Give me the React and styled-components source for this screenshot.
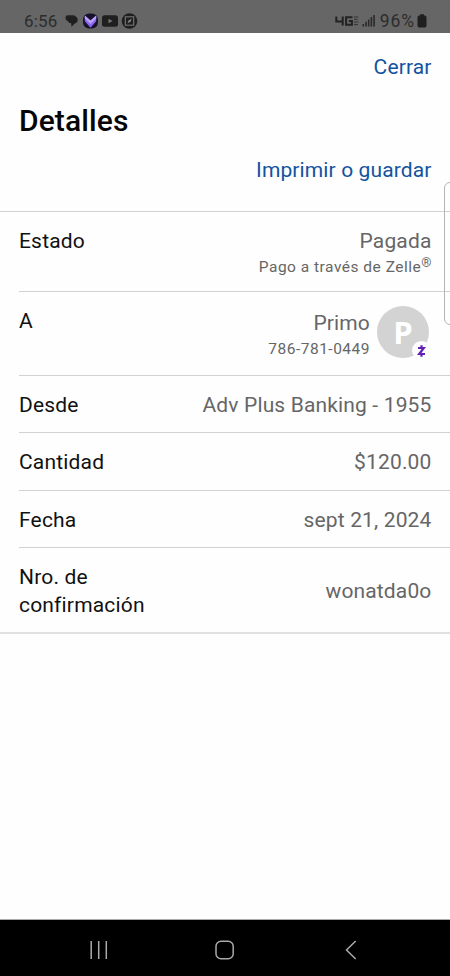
import React from "react";
import styled, { createGlobalStyle } from "styled-components";

const GlobalStyle = createGlobalStyle`
  * {
    box-sizing: border-box;
  }
  body {
    margin: 0;
    background: #fefefe;
    font-family: Roboto, "Liberation Sans", sans-serif;
  }
`;

const details = [
  { label: "Estado", value: "Pagada", note: "Pago a través de Zelle", mark: "®", height: 80 },
  { label: "A", value: "Primo", note: "786-781-0449", avatar: "P", height: 84 },
  { label: "Desde", value: "Adv Plus Banking - 1955", height: 57 },
  { label: "Cantidad", value: "$120.00", height: 58 },
  { label: "Fecha", value: "sept 21, 2024", height: 57 },
  { label: "Nro. de confirmación", value: "wonatda0o", height: 86 },
];

function StatusBar() {
  return (
    <StatusWrapper>
      <Clock>6:56</Clock>
      <svg width="76" height="18" viewBox="0 0 76 18">
        <path
          d="M4.500 3.200h6q1.800 0 2.600 1.700l.8 2-2 3.500h-5l-.6.6-1.200-1.600q-2.600-.5-2.600-3.200 0-3 2-3z"
          fill="#222"
        />
        <path
          d="M8.300 4.800h3.200q3.200 0 3.200 3 0 3-2.600 3.500l-3.600 3.500-.3-3.500q-2.900-.4-2.900-3.300 0-3.200 3-3.200z"
          fill="#1f1f1f"
        />
        <rect x="20" y="1.500" width="15" height="15" rx="6" fill="#17122a" />
        <path d="M21.800 3.500l5.700 5 5.700-5v5.800l-5.700 6.500-5.700-6.500z" fill="#8a63ee" />
        <path d="M21.800 3.500l5.700 5 5.700-5v3l-5.700 5.500-5.700-5.500z" fill="#b9a2f5" />
        <rect x="39" y="3.300" width="16" height="11.500" rx="2.500" fill="#1f1f1f" />
        <path d="M45.500 6.700l4 2.300-4 2.300z" fill="#777" />
        <circle cx="66.500" cy="9" r="7.800" fill="#1f1f1f" />
        <rect
          x="62.300"
          y="4.800"
          width="8.400"
          height="8.400"
          fill="none"
          stroke="#777"
          strokeWidth="1.100"
        />
        <path d="M64.500 11.200l1.200-3 3-1.500-1.200 3z" fill="#888" />
      </svg>
      <Spacer />
      <svg width="40" height="18" viewBox="0 0 40 18">
        <g fill="none" stroke="#222" strokeWidth="2">
          <path d="M1.300 4.500v5h7.200M7.700 4.500v9" />
          <path d="M17.500 5.300h-6.400v7.400h5.800v-3.700h-3" />
        </g>
        <path d="M19 5h4.300M19 7.300h3.500M19 10h4.300M19 12.600h4" stroke="#333" strokeWidth="1" />
        <path
          d="M28.300 12v2.500M31 9.800v4.700M33.700 7.500v7M36.400 5v9.500M39.100 3v11.500"
          stroke="#2a2a2a"
          strokeWidth="1.600"
        />
      </svg>
      <Battery>96%</Battery>
      <svg width="10" height="14" viewBox="0 0 10 14">
        <path
          d="M3 .3h4v1.200h.8q1.700 0 1.700 1.700v8.600q0 1.700-1.700 1.700h-5.600q-1.700 0-1.700-1.700v-8.600q0-1.700 1.700-1.700h.8z"
          fill="#1f1f1f"
        />
      </svg>
    </StatusWrapper>
  );
}

function Avatar({ letter }) {
  return (
    <AvatarCircle>
      {letter}
      <ZelleBadge>
        <svg width="10" height="14" viewBox="0 0 10 14">
          <path
            d="M1 4h5.800l-4.600 6h5.800M4.500 1.200v2.800M4.500 10v2.800"
            fill="none"
            stroke="#6420b5"
            strokeWidth="2.200"
          />
        </svg>
      </ZelleBadge>
    </AvatarCircle>
  );
}

function DetailRow({ item, last }) {
  return (
    <Row $height={item.height} $last={last}>
      <Label>{item.label}</Label>
      <ValueGroup $top={item.avatar ? 2 : 0} $center={last}>
        <div>
          <Value>{item.value}</Value>
          {item.note && (
            <Note>
              {item.note}
              {item.mark && <sup>{item.mark}</sup>}
            </Note>
          )}
        </div>
        {item.avatar && <Avatar letter={item.avatar} />}
      </ValueGroup>
    </Row>
  );
}

function NavBar() {
  return (
    <NavWrapper>
      <svg width="20" height="20" viewBox="0 0 20 20">
        <path d="M2.200 1v18M9.700 1v18M17.300 1v18" stroke="#aaa" strokeWidth="1.500" />
      </svg>
      <svg width="20" height="20" viewBox="0 0 20 20">
        <rect
          x="1"
          y="1.300"
          width="17.200"
          height="17.400"
          rx="5"
          fill="none"
          stroke="#aaa"
          strokeWidth="1.500"
        />
      </svg>
      <svg width="20" height="20" viewBox="0 0 20 20">
        <path d="M14.700 1l-9.200 9 9.200 9" fill="none" stroke="#aaa" strokeWidth="1.500" />
      </svg>
    </NavWrapper>
  );
}

export default function App() {
  return (
    <Screen>
      <GlobalStyle />
      <StatusBar />
      <Header>
        <LinkButton>Cerrar</LinkButton>
        <Title>Detalles</Title>
        <LinkButton>Imprimir o guardar</LinkButton>
      </Header>
      <List>
        {details.map((item, i) => (
          <DetailRow key={item.label} item={item} last={i === details.length - 1} />
        ))}
      </List>
      <EdgeHandle />
      <NavBar />
    </Screen>
  );
}

const Screen = styled.div`
  position: relative;
  display: flex;
  flex-direction: column;
  width: 450px;
  height: 976px;
  overflow: hidden;
  background: #fefefe;
`;

const StatusWrapper = styled.div`
  display: flex;
  align-items: center;
  height: 33px;
  padding: 9px 23px 0 24px;
  background: #666;
  color: #2c2c2c;
`;

const Clock = styled.span`
  width: 39px;
  font-size: 17px;
  letter-spacing: 0.2px;
`;

const Spacer = styled.div`
  flex: 1;
`;

const Battery = styled.span`
  margin: 0 2px 0 5px;
  font-size: 17.5px;
  letter-spacing: 0.9px;
`;

const Header = styled.header`
  display: flex;
  flex-direction: column;
  align-items: flex-end;
  height: 178px;
  padding: 20px 18.5px 0 19px;
`;

const LinkButton = styled.button`
  padding: 0;
  border: 0;
  background: none;
  color: #1253a0;
  font-family: inherit;
  font-size: 21px;
  line-height: 28px;
  letter-spacing: 0.12px;
`;

const Title = styled.h1`
  align-self: flex-start;
  margin: 20px 0 15px;
  color: #060606;
  font-size: 30px;
  font-weight: 500;
  line-height: 40px;
  letter-spacing: 0.1px;
`;

const List = styled.div`
  flex: 1;
  border-top: 1px solid #d2d2d2;
`;

const Row = styled.div`
  display: flex;
  justify-content: space-between;
  height: ${(p) => p.$height}px;
  margin-left: ${(p) => (p.$last ? 0 : 19)}px;
  padding: 16px 18.5px 0 ${(p) => (p.$last ? 19 : 0)}px;
  border-bottom: ${(p) => (p.$last ? "2px solid #e0e0e0" : "1px solid #d2d2d2")};
`;

const Label = styled.div`
  width: 150px;
  color: #111;
  font-size: 21px;
  line-height: 27.5px;
  letter-spacing: 0.18px;
`;

const ValueGroup = styled.div`
  display: flex;
  gap: 7px;
  padding-top: ${(p) => (p.$center ? 14 : p.$top)}px;
  color: #666;
  text-align: right;
  white-space: nowrap;
`;

const Value = styled.div`
  font-size: 21px;
  line-height: 27.5px;
  letter-spacing: 0.15px;
`;

const Note = styled.div`
  font-size: 15.5px;
  line-height: 22px;
  letter-spacing: 0.5px;

  sup {
    font-size: 13px;
    line-height: 0;
    vertical-align: 5px;
    letter-spacing: 0;
  }
`;

const AvatarCircle = styled.div`
  position: relative;
  width: 52px;
  height: 52px;
  margin: -4px 2.5px 0 0;
  border-radius: 50%;
  background: #d3d3d3;
  color: #fff;
  font-family: "Open Sans", Roboto, sans-serif;
  font-size: 31px;
  font-weight: 700;
  line-height: 52px;
  text-align: center;
`;

const ZelleBadge = styled.span`
  position: absolute;
  right: -2px;
  bottom: -2px;
  display: flex;
  align-items: center;
  justify-content: center;
  width: 19px;
  height: 19px;
  border-radius: 50%;
  background: #fefefe;
`;

const EdgeHandle = styled.div`
  position: absolute;
  top: 182px;
  right: -8px;
  width: 14px;
  height: 143px;
  border: 1px solid #b5b5b5;
  border-radius: 6px;
`;

const NavWrapper = styled.nav`
  display: flex;
  align-items: center;
  justify-content: space-between;
  height: 57px;
  padding: 4px 89px 0;
  border-top: 1px solid #aaa;
  background: #000;
`;
